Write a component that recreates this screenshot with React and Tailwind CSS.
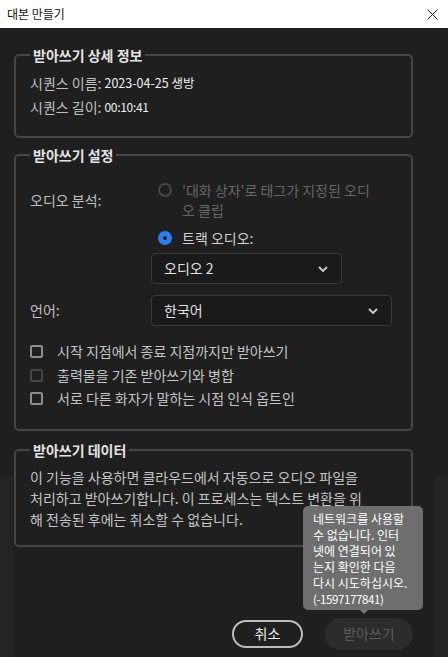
import { useState } from "react";

const FONT = "font-['Noto_Sans_CJK_KR','Noto_Sans',sans-serif]";

function Chevron() {
    return (
        <svg width="10" height="6" viewBox="0 0 10 6" className="shrink-0">
            <path d="M1 1 L5 5 L9 1" fill="none" stroke="#cfcfcf" strokeWidth="1.8" />
        </svg>
    );
}

function Select({ value, width }) {
    return (
        <div
            className={`h-[31px] ${width} flex items-center justify-between pl-[12px] pr-[13px] bg-[#1a1a1a] border border-[#3b3b3b] rounded-[4px] text-[14px] text-[#e2e2e2]`}
        >
            <span>{value}</span>
            <Chevron />
        </div>
    );
}

function Group({ title, className = "", children }) {
    return (
        <fieldset className={`w-[399px] ml-[14px] border-2 border-[#464646] rounded-[5px] p-0 ${className}`}>
            <legend className="ml-[14px] px-[3px] text-[14px] leading-[20px] font-bold text-[#e4e4e4]">
                {title}
            </legend>
            {children}
        </fieldset>
    );
}

function CheckRow({ label, disabled }) {
    return (
        <div className="h-[23.5px] flex items-center">
            <span
                className={`w-[13px] h-[13px] rounded-[2px] border-2 ${
                    disabled ? "border-[#464646]" : "border-[#8e8e8e]"
                }`}
            ></span>
            <span className="ml-[14px] text-[14px] text-[#c4c4c4]">{label}</span>
        </div>
    );
}

export default function App() {
    const [radio, setRadio] = useState("track");

    return (
        <div className={`w-[448px] h-[657px] flex flex-col overflow-hidden ${FONT}`}>
            <div className="h-[28px] shrink-0 bg-white flex items-center justify-between pl-[7px] pr-[10px]">
                <span className="text-[12px] text-[#111]">대본 만들기</span>
                <svg width="11" height="11" viewBox="0 0 11 11">
                    <path d="M0.5 0.5 L10.5 10.5 M10.5 0.5 L0.5 10.5" stroke="#1a1a1a" strokeWidth="1" />
                </svg>
            </div>

            <div className="relative flex-1 flex flex-col bg-[#1f1f1f] bg-[linear-gradient(to_right,#242424_13px,#1f1f1f_13px,#1f1f1f_435px,#242424_435px)] bg-[length:100%_180px] bg-bottom bg-no-repeat">
                <Group title="받아쓰기 상세 정보" className="mt-[17px]">
                    <div className="pl-[14px] pt-[6px] pb-[17px] text-[14px]">
                        <div className="h-[24px] flex items-center">
                            <span className="text-[#c0c0c0]">시퀀스 이름:</span>
                            <span className="ml-[3px] text-[12.5px] text-[#f0f0f0]">2023-04-25 생방</span>
                        </div>
                        <div className="h-[24px] flex items-center">
                            <span className="text-[#c0c0c0]">시퀀스 길이:</span>
                            <span className="ml-[3px] text-[12px] tracking-[-0.3px] text-[#f0f0f0]">00:10:41</span>
                        </div>
                    </div>
                </Group>

                <Group title="받아쓰기 설정" className="mt-[7px]">
                    <div className="pl-[14px] pt-[15px] pb-[18px] text-[14px]">
                        <div className="flex">
                            <div className="w-[121px] shrink-0 h-[40px] flex items-center text-[#c0c0c0]">오디오 분석:</div>
                            <div className="flex flex-col">
                                <div className="flex items-start text-[#666]">
                                    <span className="mt-[3px] ml-[7px] w-[14px] h-[14px] rounded-full border-2 border-[#474747] shrink-0"></span>
                                    <span className="ml-[10px] leading-[20px] whitespace-nowrap">
                                        '대화 상자'로 태그가 지정된 오디
                                        <br />
                                        오 클립
                                    </span>
                                </div>
                                <div
                                    className="mt-[8px] h-[20px] flex items-center cursor-pointer"
                                    onClick={() => setRadio("track")}
                                >
                                    <span className="ml-[7px] w-[14px] h-[14px] rounded-full bg-[#2c7ef0] flex items-center justify-center shrink-0">
                                        {radio === "track" && <span className="w-[4px] h-[4px] rounded-full bg-[#1a1a1a]"></span>}
                                    </span>
                                    <span className="ml-[10px] text-[#d0d0d0]">트랙 오디오:</span>
                                </div>
                                <div className="mt-[5px]">
                                    <Select value="오디오 2" width="w-[191px]" />
                                </div>
                            </div>
                        </div>

                        <div className="flex items-center mt-[11px]">
                            <div className="w-[121px] shrink-0 text-[#c0c0c0]">언어:</div>
                            <Select value="한국어" width="w-[241px]" />
                        </div>

                        <div className="mt-[14px] flex flex-col">
                            <CheckRow label="시작 지점에서 종료 지점까지만 받아쓰기" />
                            <CheckRow label="출력물을 기존 받아쓰기와 병합" disabled />
                            <CheckRow label="서로 다른 화자가 말하는 시점 인식 옵트인" />
                        </div>
                    </div>
                </Group>

                <Group title="받아쓰기 데이터" className="mt-[9px]">
                    <p className="pl-[14px] pt-[7px] pb-[15px] text-[14px] leading-[21px] text-[#c4c4c4] whitespace-nowrap">
                        이 기능을 사용하면 클라우드에서 자동으로 오디오 파일을
                        <br />
                        처리하고 받아쓰기합니다. 이 프로세스는 텍스트 변환을 위
                        <br />
                        해 전송된 후에는 취소할 수 없습니다.
                    </p>
                </Group>

                <div className="mt-[71px] w-[413px] h-[32px] flex items-center justify-end gap-[22px]">
                    <button
                        type="button"
                        className="w-[71px] h-[28px] rounded-full border-2 border-[#bdbdbd] text-[14px] text-[#ededed] flex items-center justify-center"
                    >
                        취소
                    </button>
                    <button
                        type="button"
                        disabled
                        className="w-[88px] h-[32px] rounded-full bg-[#2c2c2c] text-[14px] text-[#5c5c5c] flex items-center justify-center"
                    >
                        받아쓰기
                    </button>
                </div>

                <div className="absolute left-[303px] top-[478px] w-[120px] h-[104px] rounded-[5px] bg-[#6e6e6e] pl-[10px] pt-[5px] text-[12px] leading-[16px] text-white whitespace-nowrap">
                    네트워크를 사용할
                    <br />
                    수 없습니다. 인터
                    <br />
                    넷에 연결되어 있
                    <br />
                    는지 확인한 다음
                    <br />
                    다시 시도하십시오.
                    <br />
                    <span className="text-[11.5px] tracking-[-0.4px]">(-1597177841)</span>
                    <span className="absolute left-[57px] top-[104px] w-0 h-0 border-x-[4px] border-x-transparent border-t-[4px] border-t-[#777]"></span>
                </div>
            </div>
        </div>
    );
}
